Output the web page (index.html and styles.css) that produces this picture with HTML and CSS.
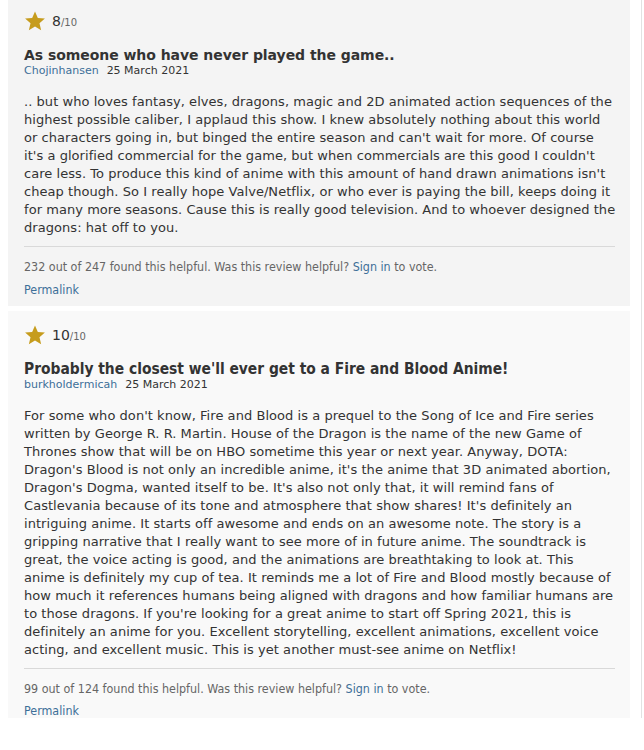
FILE: index.html
```html
<!DOCTYPE html>
<html>
<head>
<meta charset="utf-8">
<link rel="stylesheet" href="styles.css">
</head>
<body>
<div class="list">
  <div class="review review--odd review--first">
    <div class="rating">
      <svg class="star" viewBox="0 0 24 24" width="22" height="22"><path d="M12 1.6l3.1 7.1 7.7.6-5.9 5.1 1.8 7.6L12 17.9 5.3 22l1.8-7.6-5.9-5.1 7.7-.6z" fill="#c69c1d"/></svg>
      <span class="score">8</span><span class="scale">/10</span>
    </div>
    <div class="title title--verdana">As someone who have never played the game..</div>
    <div class="meta"><a class="user" href="#">Chojinhansen</a><span class="date">25 March 2021</span></div>
    <div class="content">.. but who loves fantasy, elves, dragons, magic and 2D animated action sequences of the<br>highest possible caliber, I applaud this show. I knew absolutely nothing about this world<br>or characters going in, but binged the entire season and can't wait for more. Of course<br>it's a glorified commercial for the game, but when commercials are this good I couldn't<br>care less. To produce this kind of anime with this amount of hand drawn animations isn't<br>cheap though. So I really hope Valve/Netflix, or who ever is paying the bill, keeps doing it<br>for many more seasons. Cause this is really good television. And to whoever designed the<br>dragons: hat off to you.</div>
    <div class="actions">232 out of 247 found this helpful. Was this review helpful? <a href="#">Sign in</a> to vote.</div>
    <a class="permalink" href="#">Permalink</a>
  </div>
  <div class="review review--even review--last">
    <div class="rating">
      <svg class="star" viewBox="0 0 24 24" width="22" height="22"><path d="M12 1.6l3.1 7.1 7.7.6-5.9 5.1 1.8 7.6L12 17.9 5.3 22l1.8-7.6-5.9-5.1 7.7-.6z" fill="#c69c1d"/></svg>
      <span class="score">10</span><span class="scale">/10</span>
    </div>
    <div class="title title--tahoma">Probably the closest we'll ever get to a Fire and Blood Anime!</div>
    <div class="meta"><a class="user" href="#">burkholdermicah</a><span class="date">25 March 2021</span></div>
    <div class="content">For some who don't know, Fire and Blood is a prequel to the Song of Ice and Fire series<br>written by George R. R. Martin. House of the Dragon is the name of the new Game of<br>Thrones show that will be on HBO sometime this year or next year. Anyway, DOTA:<br>Dragon's Blood is not only an incredible anime, it's the anime that 3D animated abortion,<br>Dragon's Dogma, wanted itself to be. It's also not only that, it will remind fans of<br>Castlevania because of its tone and atmosphere that show shares! It's definitely an<br>intriguing anime. It starts off awesome and ends on an awesome note. The story is a<br>gripping narrative that I really want to see more of in future anime. The soundtrack is<br>great, the voice acting is good, and the animations are breathtaking to look at. This<br>anime is definitely my cup of tea. It reminds me a lot of Fire and Blood mostly because of<br>how much it references humans being aligned with dragons and how familiar humans are<br>to those dragons. If you're looking for a great anime to start off Spring 2021, this is<br>definitely an anime for you. Excellent storytelling, excellent animations, excellent voice<br>acting, and excellent music. This is yet another must-see anime on Netflix!</div>
    <div class="actions">99 out of 124 found this helpful. Was this review helpful? <a href="#">Sign in</a> to vote.</div>
    <a class="permalink" href="#">Permalink</a>
  </div>
</div>
</body>
</html>
```
FILE: styles.css
```css
html, body {
  margin: 0;
  padding: 0;
  background: #ffffff;
}
body {
  padding-left: 8px;
  font-family: "DejaVu Sans", Verdana, sans-serif;
  color: #333333;
}
a {
  color: #3d6f98;
  text-decoration: none;
}
.list {
  width: 622px;
  padding-right: 11px;
  border-right: 1px solid #e2e2e2;
  display: flex;
  flex-direction: column;
  gap: 5px;
  margin-top: -3px;
}
.review {
  padding: 13px 15px 8px 16px;
  display: flex;
  flex-direction: column;
  align-items: flex-start;
}
.review--odd { background: #f4f4f4; }
.review--even { background: #f9f9f9; }
.review--last { padding-bottom: 0; }
.rating {
  display: flex;
  align-items: center;
  height: 22px;
}
.star {
  display: block;
  margin-right: 6px;
}
.score {
  font-size: 14px;
  color: #333;
}
.scale {
  font-size: 10px;
  color: #666;
  margin-top: 3px;
}
.title {
  margin-top: 15px;
  line-height: 17px;
  font-weight: bold;
  color: #333;
  white-space: nowrap;
}
.title--verdana {
  font-family: "DejaVu Sans", Verdana, sans-serif;
  font-size: 14px;
  letter-spacing: -0.05px;
}
.title--tahoma {
  font-family: "DejaVu Sans Condensed", Tahoma, sans-serif;
  font-size: 15.4px;
}
.meta {
  font-size: 11px;
  line-height: 13px;
}
.date {
  margin-left: 8px;
  color: #333;
}
.content {
  margin-top: 16px;
  font-size: 13px;
  line-height: 18px;
  letter-spacing: 0.05px;
  white-space: nowrap;
  color: #333;
  padding-bottom: 9px;
  border-bottom: 1px solid #d9d9d9;
  width: 100%;
}
.actions {
  margin-top: 12px;
  font-family: "DejaVu Sans Condensed", Tahoma, sans-serif;
  font-size: 12.4px;
  line-height: 16px;
  color: #666;
}
.permalink {
  margin-top: 7px;
  font-family: "DejaVu Sans Condensed", Tahoma, sans-serif;
  font-size: 12.4px;
  line-height: 16px;
}
.review--last .permalink {
  line-height: 14px;
}
```
